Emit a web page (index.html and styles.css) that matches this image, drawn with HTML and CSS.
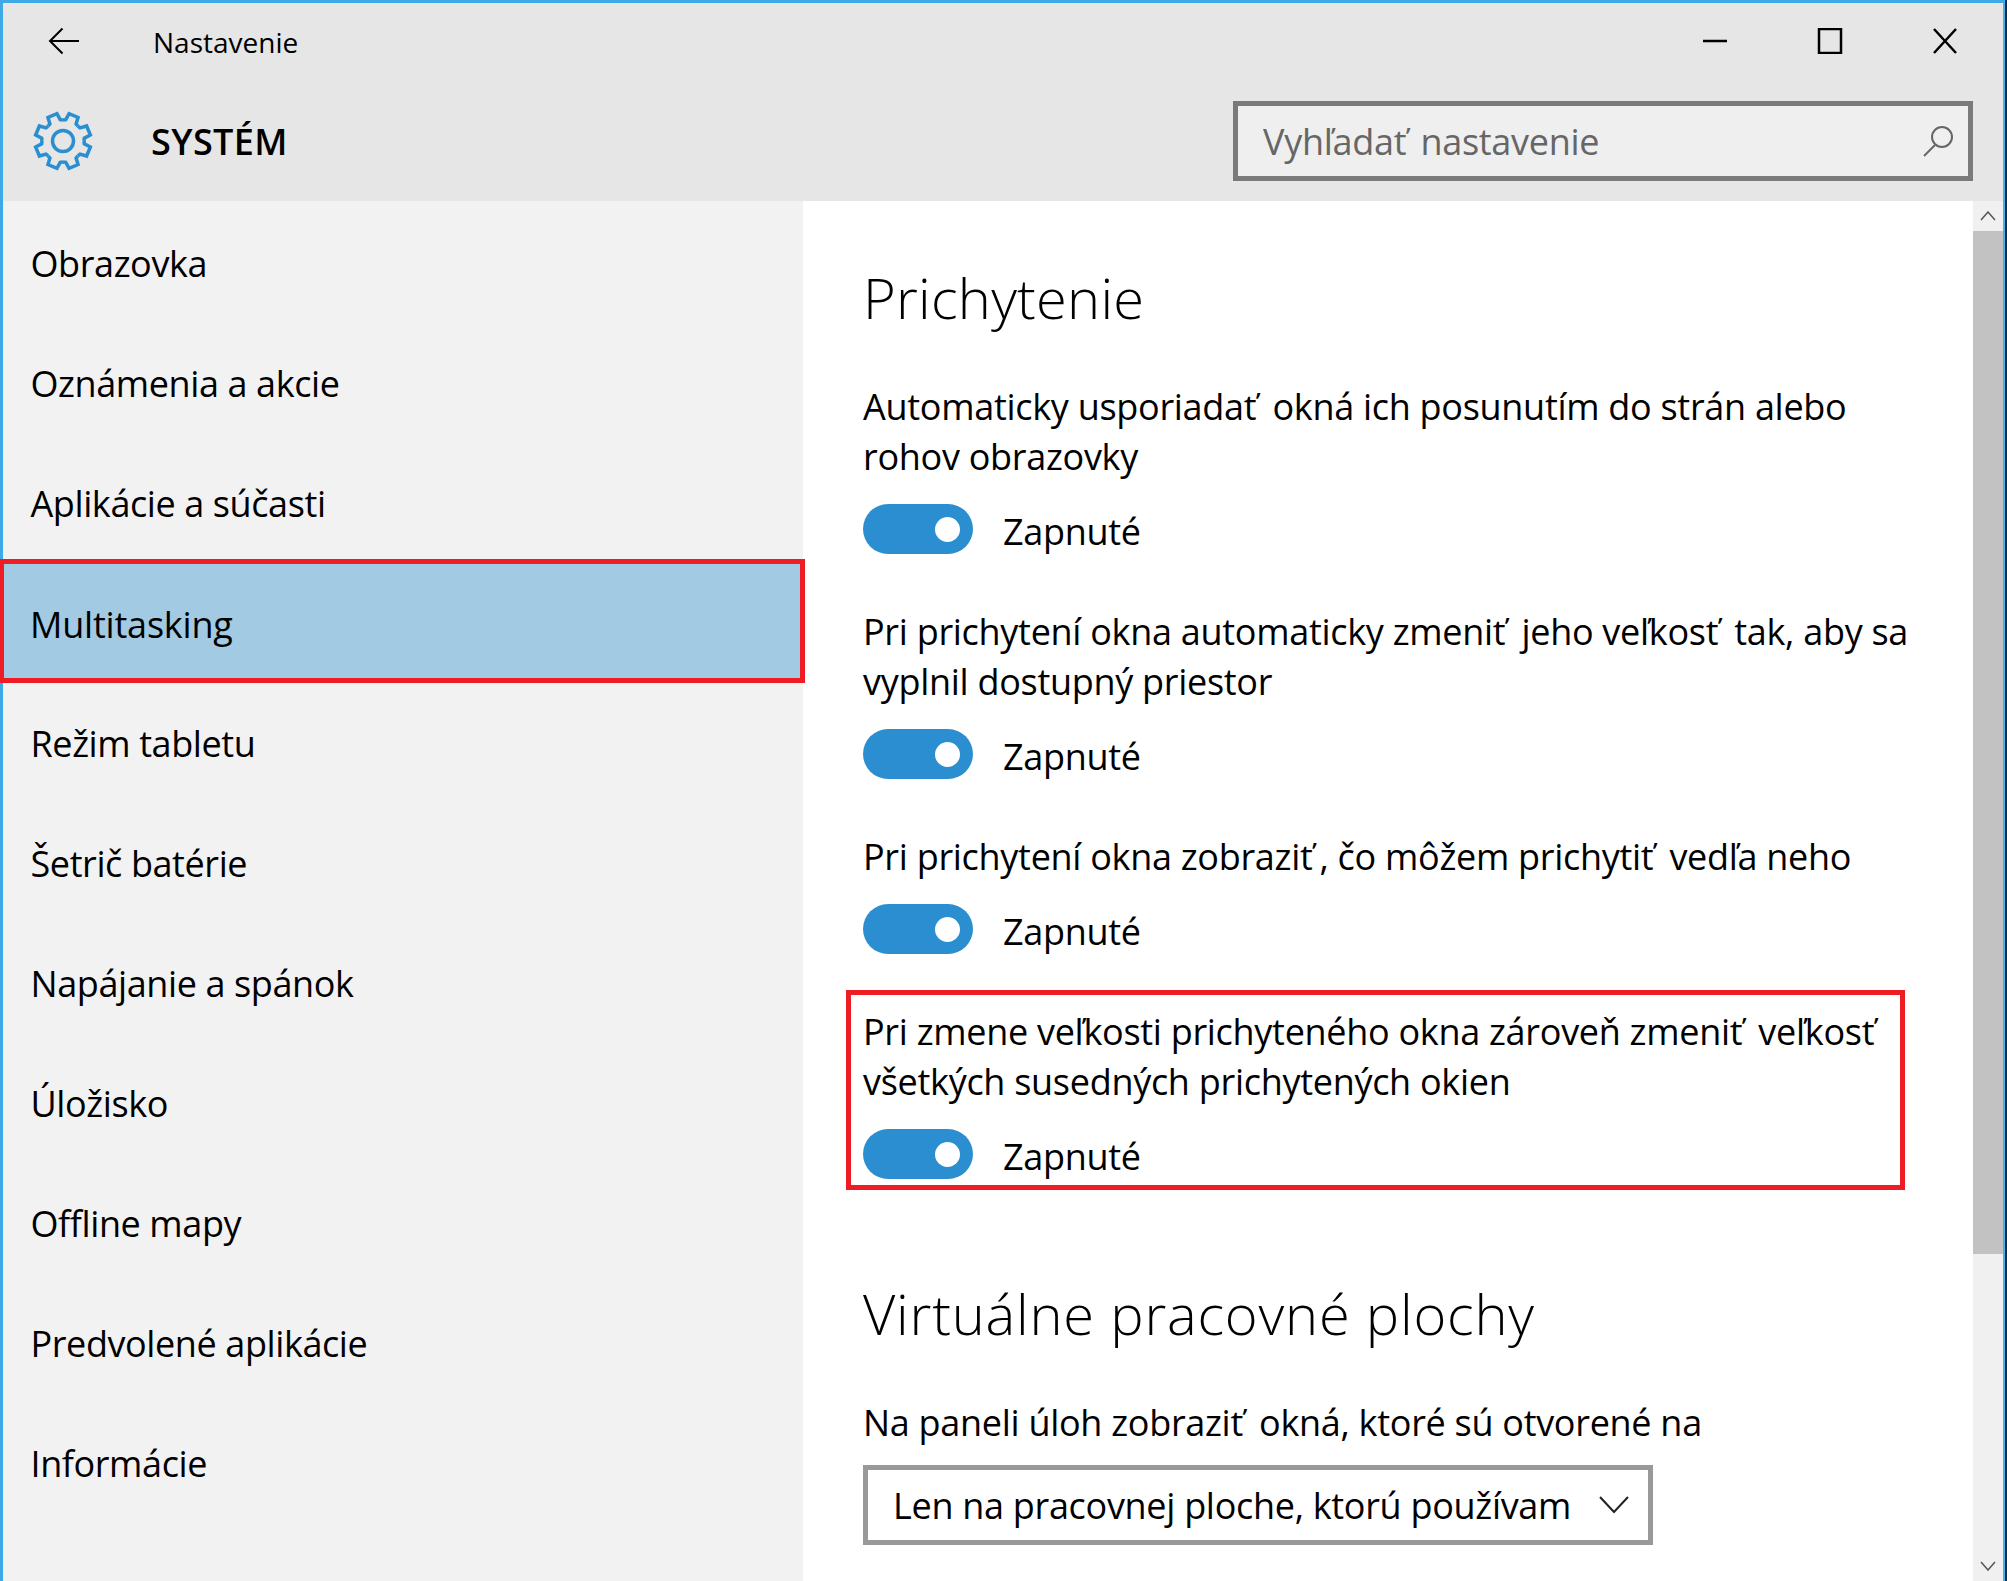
FILE: index.html
```html
<!DOCTYPE html>
<html lang="sk">
<head>
<meta charset="utf-8">
<title>Nastavenie</title>
<link rel="stylesheet" href="styles.css">
</head>
<body>
<div class="window">
  <header class="header">
    <div class="titlebar">
      <svg class="back" width="32" height="28" viewBox="0 0 32 28"><path d="M31 14H2M14.5 1.500 2 14l12.500 12.500"/></svg>
      <span class="apptitle">Nastavenie</span>
      <div class="winbtns">
        <svg class="winbtn" width="26" height="26" viewBox="0 0 26 26"><path d="M1 13h24"/></svg>
        <svg class="winbtn" width="26" height="26" viewBox="0 0 26 26"><rect x="2" y="1" width="22" height="24"/></svg>
        <svg class="winbtn" width="26" height="26" viewBox="0 0 26 26"><path d="M2 1l22 24M24 1 2 25"/></svg>
      </div>
    </div>
    <div class="pagebar">
      <svg class="gear" width="62" height="62" viewBox="-31 -31 62 62">
        <defs><path id="tooth" d="M-8.040-19.400-5.560-20.770-4.860-27.570 4.860-27.570 5.560-20.770 8.040-19.400"/></defs>
        <use href="#tooth" transform="rotate(22.500)"/>
        <use href="#tooth" transform="rotate(67.500)"/>
        <use href="#tooth" transform="rotate(112.500)"/>
        <use href="#tooth" transform="rotate(157.500)"/>
        <use href="#tooth" transform="rotate(202.500)"/>
        <use href="#tooth" transform="rotate(247.500)"/>
        <use href="#tooth" transform="rotate(292.500)"/>
        <use href="#tooth" transform="rotate(337.500)"/>
        <circle r="10.500"/>
      </svg>
      <h1 class="pagetitle">SYSTÉM</h1>
      <div class="search">
        <span class="search-text">Vyhľada<span class="tc">ť</span> nastavenie</span>
        <svg class="search-icon" width="32" height="32" viewBox="0 0 32 32"><circle cx="20" cy="12" r="10"/><path d="M13 20 2 31"/></svg>
      </div>
    </div>
  </header>
  <div class="body">
    <nav class="side">
      <a class="item">Obrazovka</a>
      <a class="item">Oznámenia a akcie</a>
      <a class="item">Aplikácie a súčasti</a>
      <a class="item selected">Multitasking</a>
      <a class="item">Režim tabletu</a>
      <a class="item">Šetrič batérie</a>
      <a class="item">Napájanie a spánok</a>
      <a class="item">Úložisko</a>
      <a class="item">Offline mapy</a>
      <a class="item">Predvolené aplikácie</a>
      <a class="item">Informácie</a>
    </nav>
    <main class="content">
      <h2 class="heading">Prichytenie</h2>
      <section class="setting">
        <p class="label">Automaticky usporiada<span class="tc">ť</span> okná ich posunutím do strán alebo<br>rohov obrazovky</p>
        <div class="toggle-row"><span class="toggle"><span class="knob"></span></span><span class="state">Zapnuté</span></div>
      </section>
      <section class="setting">
        <p class="label">Pri prichytení okna automaticky zmeni<span class="tc">ť</span> jeho veľkos<span class="tc">ť</span> tak, aby sa<br>vyplnil dostupný priestor</p>
        <div class="toggle-row"><span class="toggle"><span class="knob"></span></span><span class="state">Zapnuté</span></div>
      </section>
      <section class="setting">
        <p class="label">Pri prichytení okna zobrazi<span class="tc">ť</span>, čo môžem prichyti<span class="tc">ť</span> vedľa neho</p>
        <div class="toggle-row"><span class="toggle"><span class="knob"></span></span><span class="state">Zapnuté</span></div>
      </section>
      <section class="setting marked">
        <p class="label">Pri zmene veľkosti prichyteného okna zároveň zmeni<span class="tc">ť</span> veľkos<span class="tc">ť</span><br>všetkých susedných prichytených okien</p>
        <div class="toggle-row"><span class="toggle"><span class="knob"></span></span><span class="state">Zapnuté</span></div>
      </section>
      <h2 class="heading second">Virtuálne pracovné plochy</h2>
      <p class="label combo-label">Na paneli úloh zobrazi<span class="tc">ť</span> okná, ktoré sú otvorené na</p>
      <div class="combo">
        <span class="combo-text">Len na pracovnej ploche, ktorú používam</span>
        <svg class="chev" width="30" height="18" viewBox="0 0 30 18"><path d="M1 1l14 15L29 1"/></svg>
      </div>
    </main>
    <aside class="scrollbar">
      <svg class="arrow" width="16" height="10" viewBox="0 0 16 10"><path d="M1 9l7-8 7 8"/></svg>
      <div class="thumb"></div>
      <div class="track"></div>
      <svg class="arrow" width="16" height="10" viewBox="0 0 16 10"><path d="M1 1l7 8 7-8"/></svg>
    </aside>
  </div>
</div>
</body>
</html>
```
FILE: styles.css
```css
* { box-sizing: border-box; }
html, body { margin: 0; height: 100%; overflow: hidden; background: #062f57; }
body { font-family: "Open Sans", "Noto Sans", sans-serif; color: #000; }
.window {
  width: 2005px; height: 1581px; display: flex; flex-direction: column; background: #fff;
  border-top: 3px solid #3fa9e8; border-left: 3px solid #3fa9e8; border-right: 2px solid #4fade9;
}
.header { background: #e6e6e6; height: 198px; flex: none; }
.titlebar { height: 78px; display: flex; align-items: center; position: relative; }
.back { margin-left: 45px; fill: none; stroke: #000; stroke-width: 2; margin-top: -3px; }
.apptitle { margin-left: 73px; font-size: 28px; }
.winbtns { margin-left: auto; margin-right: 45px; display: flex; gap: 89px; margin-top: -2px; }
.winbtn { fill: none; stroke: #000; stroke-width: 2.500; }
.pagebar { height: 120px; display: flex; align-items: flex-start; }
.gear { margin-left: 29px; margin-top: 29px; fill: none; stroke: #2b8ed0; stroke-width: 3.500; flex: none; }
.pagetitle { margin: 36px 0 0 57px; font-size: 36px; letter-spacing: 0.4px; font-weight: 600; line-height: 50px; }
.search {
  margin-left: auto; margin-right: 30px; margin-top: 20px; width: 740px; height: 80px;
  border: 5px solid #7a7a7a; background: #efefef;
  display: flex; align-items: center; padding: 0 14px 0 25px;
}
.search-text { font-size: 36px; letter-spacing: -0.28px; color: #666; }
.search-icon { margin-left: auto; fill: none; stroke: #666; stroke-width: 2; }
.tc { margin-right: 7px; }
.search-text .tc { margin-right: 5px; }
.body { flex: 1; display: flex; min-height: 0; }
.side { width: 800px; flex: none; background: #f2f2f2; padding-top: 3px; display: flex; flex-direction: column; }
.item { height: 120px; display: flex; align-items: center; padding: 0 0 2px 27.500px; font-size: 36px; letter-spacing: -0.4px; flex: none; }
.item.selected {
  background: #a2cae3; height: 114px; margin: 0 0 6px 1px; width: 796px; padding: 6px 0 0 26px;
  letter-spacing: -0.2px; outline: 5px solid #ee1c25; position: relative;
}
.content { flex: 1; padding: 59px 0 0 60px; min-width: 0; }
.heading { margin: 0; font-size: 56px; letter-spacing: 0.25px; font-weight: 300; line-height: 74px; }
.heading.second { margin-top: 86px; letter-spacing: 0.8px; }
.setting { margin-top: 48px; }
.setting + .setting { margin-top: 53px; }
.label { margin: 0; font-size: 36px; letter-spacing: -0.29px; line-height: 50px; white-space: nowrap; }
.toggle-row { display: flex; align-items: center; margin-top: 22px; height: 50px; }
.toggle { width: 110px; height: 50px; border-radius: 25px; background: #2b8ed0; flex: none; display: flex; align-items: center; justify-content: flex-end; padding-right: 13px; }
.knob { width: 25px; height: 25px; border-radius: 50%; background: #fff; }
.state { margin-left: 30px; padding-top: 5px; font-size: 36px; letter-spacing: -0.3px; line-height: 50px; }
.setting + .setting.marked {
  margin: 36px 0 0 -17px; width: 1059px; padding: 12px 12px 6px; border: 5px solid #ee1c25;
}
.combo-label { margin-top: 48px; }
.combo {
  margin-top: 17px; width: 790px; height: 80px; border: 5px solid #999; display: flex; align-items: center; padding: 0 19px 0 25px;
}
.combo-text { font-size: 36px; letter-spacing: -0.3px; white-space: nowrap; }
.chev { margin-left: auto; fill: none; stroke: #222; stroke-width: 2; }
.scrollbar { width: 30px; flex: none; background: #f0f0f0; display: flex; flex-direction: column; align-items: center; }
.arrow { fill: none; stroke: #555; stroke-width: 1.500; flex: none; margin: 10px 0; }
.thumb { width: 100%; height: 1023px; background: #c2c2c2; flex: none; }
.track { flex: 1; }
```
